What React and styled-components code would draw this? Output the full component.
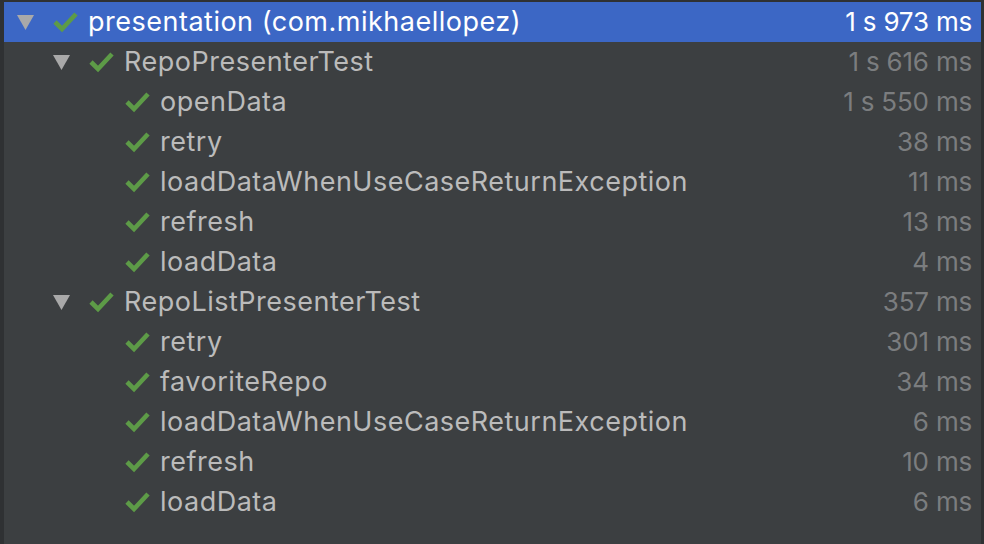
import React from "react";
import styled, { createGlobalStyle } from "styled-components";

const Global = createGlobalStyle`
  html, body { margin: 0; padding: 0; background: #2e3032; }
  body { font-family: Inter, "Noto Sans", sans-serif; }
`;

const Frame = styled.div`
  width: 984px;
  height: 544px;
  box-sizing: border-box;
  background: #2f3133;
  padding: 2px 3px 0 4px;
  overflow: hidden;
`;

const Tree = styled.div`
  height: 100%;
  background: #3c3f41;
  display: flex;
  flex-direction: column;
`;

const Row = styled.div`
  height: 40px;
  flex: 0 0 40px;
  display: flex;
  align-items: center;
  padding-left: ${(p) => 10 + p.$level * 36}px;
  padding-right: 9px;
  background: ${(p) => (p.$selected ? "#3c67c5" : "transparent")};
  font-size: 27px;
`;

const Toggle = styled.span`
  width: 22px;
  height: 22px;
  display: flex;
  align-items: center;
  justify-content: center;
  margin-right: 17px;
  flex: none;
`;

const Spacer = styled.span`
  width: 39px;
  flex: none;
`;

const Check = styled.svg`
  width: 26px;
  height: 22px;
  margin-right: 9px;
  flex: none;
`;

const Label = styled.span`
  flex: 1;
  color: ${(p) => (p.$selected ? "#ffffff" : "#bbbbbb")};
  white-space: nowrap;
  letter-spacing: 0.5px;
  line-height: 40px;
`;

const Time = styled.span`
  color: ${(p) => (p.$selected ? "#ffffff" : "#7b7d7f")};
  white-space: nowrap;
  font-size: 26px;
  letter-spacing: -0.2px;
  line-height: 40px;
`;

const Triangle = () => (
  <svg width="17" height="15" viewBox="0 0 17 15">
    <polygon points="0,0 17,0 8.5,15" fill="#a9a9a9" />
  </svg>
);

const CheckIcon = () => (
  <Check viewBox="0 0 26 22">
    <path d="M2 11 L9 18 L23 3" fill="none" stroke="#5d9b47" strokeWidth="4.6" strokeLinejoin="miter" />
  </Check>
);

const data = [
  { level: 0, label: "presentation (com.mikhaellopez)", time: "1 s 973 ms", toggle: true, selected: true },
  { level: 1, label: "RepoPresenterTest", time: "1 s 616 ms", toggle: true },
  { level: 2, label: "openData", time: "1 s 550 ms" },
  { level: 2, label: "retry", time: "38 ms" },
  { level: 2, label: "loadDataWhenUseCaseReturnException", time: "11 ms" },
  { level: 2, label: "refresh", time: "13 ms" },
  { level: 2, label: "loadData", time: "4 ms" },
  { level: 1, label: "RepoListPresenterTest", time: "357 ms", toggle: true },
  { level: 2, label: "retry", time: "301 ms" },
  { level: 2, label: "favoriteRepo", time: "34 ms" },
  { level: 2, label: "loadDataWhenUseCaseReturnException", time: "6 ms" },
  { level: 2, label: "refresh", time: "10 ms" },
  { level: 2, label: "loadData", time: "6 ms" },
];

export default function App() {
  return (
    <>
      <Global />
      <Frame>
        <Tree>
          {data.map((r, i) => (
            <Row key={i} $level={r.level} $selected={r.selected}>
              {r.toggle ? (
                <Toggle>
                  <Triangle />
                </Toggle>
              ) : (
                <Spacer />
              )}
              <CheckIcon />
              <Label $selected={r.selected}>{r.label}</Label>
              <Time $selected={r.selected}>{r.time}</Time>
            </Row>
          ))}
        </Tree>
      </Frame>
    </>
  );
}
